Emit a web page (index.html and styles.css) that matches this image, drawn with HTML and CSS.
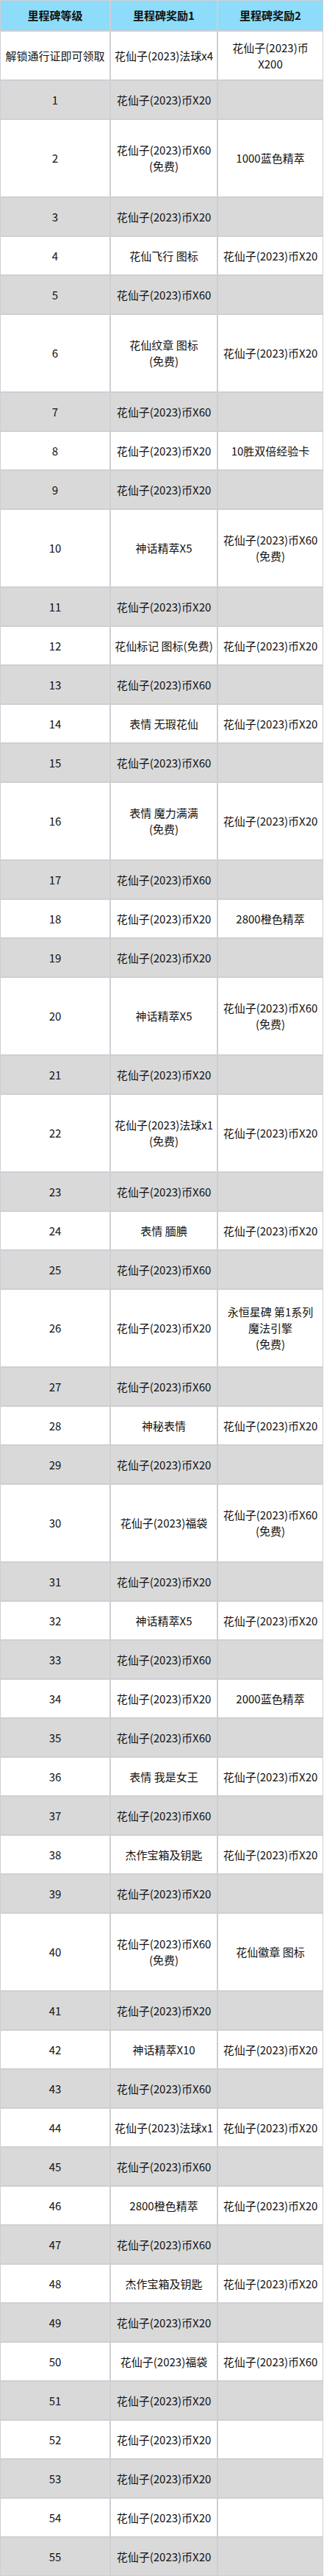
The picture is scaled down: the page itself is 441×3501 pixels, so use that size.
FILE: index.html
```html
<!DOCTYPE html>
<html lang="zh-CN">
<head>
<meta charset="utf-8">
<title>里程碑奖励</title>
<link rel="stylesheet" href="styles.css">
</head>
<body>
<table class="rewards">
<colgroup><col class="c1"><col class="c2"><col class="c3"></colgroup>
<thead>
<tr class="head"><th>里程碑等级</th><th>里程碑奖励1</th><th>里程碑奖励2</th></tr>
</thead>
<tbody>
<tr class="unlock"><td>解锁通行证即可领取</td><td>花仙子(2023)法球x4</td><td>花仙子(2023)币<br>X200</td></tr>
<tr class="alt"><td>1</td><td>花仙子(2023)币X20</td><td></td></tr>
<tr class="tall"><td>2</td><td>花仙子(2023)币X60<br>(免费)</td><td>1000蓝色精萃</td></tr>
<tr class="alt"><td>3</td><td>花仙子(2023)币X20</td><td></td></tr>
<tr><td>4</td><td>花仙飞行 图标</td><td>花仙子(2023)币X20</td></tr>
<tr class="alt"><td>5</td><td>花仙子(2023)币X60</td><td></td></tr>
<tr class="tall"><td>6</td><td>花仙纹章 图标<br>(免费)</td><td>花仙子(2023)币X20</td></tr>
<tr class="alt"><td>7</td><td>花仙子(2023)币X60</td><td></td></tr>
<tr><td>8</td><td>花仙子(2023)币X20</td><td>10胜双倍经验卡</td></tr>
<tr class="alt"><td>9</td><td>花仙子(2023)币X20</td><td></td></tr>
<tr class="tall"><td>10</td><td>神话精萃X5</td><td>花仙子(2023)币X60<br>(免费)</td></tr>
<tr class="alt"><td>11</td><td>花仙子(2023)币X20</td><td></td></tr>
<tr><td>12</td><td>花仙标记 图标(免费)</td><td>花仙子(2023)币X20</td></tr>
<tr class="alt"><td>13</td><td>花仙子(2023)币X60</td><td></td></tr>
<tr><td>14</td><td>表情 无瑕花仙</td><td>花仙子(2023)币X20</td></tr>
<tr class="alt"><td>15</td><td>花仙子(2023)币X60</td><td></td></tr>
<tr class="tall"><td>16</td><td>表情 魔力满满<br>(免费)</td><td>花仙子(2023)币X20</td></tr>
<tr class="alt"><td>17</td><td>花仙子(2023)币X60</td><td></td></tr>
<tr><td>18</td><td>花仙子(2023)币X20</td><td>2800橙色精萃</td></tr>
<tr class="alt"><td>19</td><td>花仙子(2023)币X20</td><td></td></tr>
<tr class="tall"><td>20</td><td>神话精萃X5</td><td>花仙子(2023)币X60<br>(免费)</td></tr>
<tr class="alt"><td>21</td><td>花仙子(2023)币X20</td><td></td></tr>
<tr class="tall"><td>22</td><td>花仙子(2023)法球x1<br>(免费)</td><td>花仙子(2023)币X20</td></tr>
<tr class="alt"><td>23</td><td>花仙子(2023)币X60</td><td></td></tr>
<tr><td>24</td><td>表情 腼腆</td><td>花仙子(2023)币X20</td></tr>
<tr class="alt"><td>25</td><td>花仙子(2023)币X60</td><td></td></tr>
<tr class="tall"><td>26</td><td>花仙子(2023)币X20</td><td>永恒星碑 第1系列<br>魔法引擎<br>(免费)</td></tr>
<tr class="alt"><td>27</td><td>花仙子(2023)币X60</td><td></td></tr>
<tr><td>28</td><td>神秘表情</td><td>花仙子(2023)币X20</td></tr>
<tr class="alt"><td>29</td><td>花仙子(2023)币X20</td><td></td></tr>
<tr class="tall"><td>30</td><td>花仙子(2023)福袋</td><td>花仙子(2023)币X60<br>(免费)</td></tr>
<tr class="alt"><td>31</td><td>花仙子(2023)币X20</td><td></td></tr>
<tr><td>32</td><td>神话精萃X5</td><td>花仙子(2023)币X20</td></tr>
<tr class="alt"><td>33</td><td>花仙子(2023)币X60</td><td></td></tr>
<tr><td>34</td><td>花仙子(2023)币X20</td><td>2000蓝色精萃</td></tr>
<tr class="alt"><td>35</td><td>花仙子(2023)币X60</td><td></td></tr>
<tr><td>36</td><td>表情 我是女王</td><td>花仙子(2023)币X20</td></tr>
<tr class="alt"><td>37</td><td>花仙子(2023)币X60</td><td></td></tr>
<tr><td>38</td><td>杰作宝箱及钥匙</td><td>花仙子(2023)币X20</td></tr>
<tr class="alt"><td>39</td><td>花仙子(2023)币X20</td><td></td></tr>
<tr class="tall"><td>40</td><td>花仙子(2023)币X60<br>(免费)</td><td>花仙徽章 图标</td></tr>
<tr class="alt"><td>41</td><td>花仙子(2023)币X20</td><td></td></tr>
<tr><td>42</td><td>神话精萃X10</td><td>花仙子(2023)币X20</td></tr>
<tr class="alt"><td>43</td><td>花仙子(2023)币X60</td><td></td></tr>
<tr><td>44</td><td>花仙子(2023)法球x1</td><td>花仙子(2023)币X20</td></tr>
<tr class="alt"><td>45</td><td>花仙子(2023)币X60</td><td></td></tr>
<tr><td>46</td><td>2800橙色精萃</td><td>花仙子(2023)币X20</td></tr>
<tr class="alt"><td>47</td><td>花仙子(2023)币X60</td><td></td></tr>
<tr><td>48</td><td>杰作宝箱及钥匙</td><td>花仙子(2023)币X20</td></tr>
<tr class="alt"><td>49</td><td>花仙子(2023)币X20</td><td></td></tr>
<tr><td>50</td><td>花仙子(2023)福袋</td><td>花仙子(2023)币X60</td></tr>
<tr class="alt"><td>51</td><td>花仙子(2023)币X20</td><td></td></tr>
<tr><td>52</td><td>花仙子(2023)币X20</td><td></td></tr>
<tr class="alt"><td>53</td><td>花仙子(2023)币X20</td><td></td></tr>
<tr><td>54</td><td>花仙子(2023)币X20</td><td></td></tr>
<tr class="alt"><td>55</td><td>花仙子(2023)币X20</td><td></td></tr>
</tbody>
</table>
</body>
</html>
```

FILE: styles.css
```css
html, body {
  margin: 0;
  padding: 0;
  background: #ffffff;
}

body {
  font-family: "Noto Sans CJK SC", "Noto Sans", sans-serif;
  font-size: 15px;
  line-height: 22px;
  color: #111111;
}

.rewards {
  width: 440px;
  table-layout: fixed;
  border-collapse: separate;
  border-spacing: 0;
}

.rewards col.c1 { width: 150px; }
.rewards col.c2 { width: 146px; }
.rewards col.c3 { width: 144px; }

.rewards th,
.rewards td {
  border: 1px solid #cfcfd5;
  padding: 0;
  text-align: center;
  vertical-align: middle;
  white-space: nowrap;
  background: #ffffff;
  height: 51px;
}

.rewards th {
  background: #8ddcf9;
  font-weight: bold;
  height: 40px;
  color: #111111;
}

.rewards tr.unlock td { height: 65px; }
.rewards tr.tall td { height: 104px; }
.rewards tr.alt td { background: #d9d9d9; }
```
